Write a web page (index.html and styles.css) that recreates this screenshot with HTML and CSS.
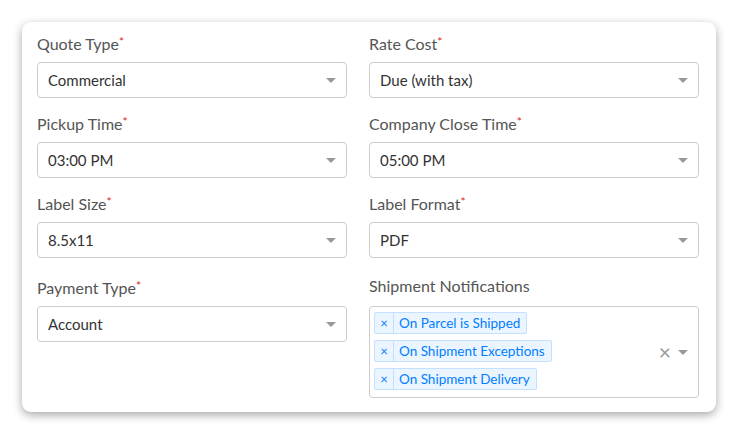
FILE: index.html
```html
<!DOCTYPE html>
<html lang="en">
<head>
    <meta charset="UTF-8">
    <title>Shipment Settings</title>
    <link rel="stylesheet" href="styles.css">
</head>
<body>
    <div class="card">
        <div class="form-grid">
            <div class="field">
                <label class="label">Quote Type<span class="req">*</span></label>
                <div class="select"><span class="value">Commercial</span><span class="arrow"></span></div>
            </div>
            <div class="field">
                <label class="label">Rate Cost<span class="req">*</span></label>
                <div class="select"><span class="value">Due (with tax)</span><span class="arrow"></span></div>
            </div>

            <div class="field">
                <label class="label">Pickup Time<span class="req">*</span></label>
                <div class="select"><span class="value">03:00 PM</span><span class="arrow"></span></div>
            </div>
            <div class="field">
                <label class="label">Company Close Time<span class="req">*</span></label>
                <div class="select"><span class="value">05:00 PM</span><span class="arrow"></span></div>
            </div>

            <div class="field">
                <label class="label">Label Size<span class="req">*</span></label>
                <div class="select"><span class="value">8.5x11</span><span class="arrow"></span></div>
            </div>
            <div class="field">
                <label class="label">Label Format<span class="req">*</span></label>
                <div class="select"><span class="value">PDF</span><span class="arrow"></span></div>
            </div>

            <div class="field last">
                <label class="label">Payment Type<span class="req">*</span></label>
                <div class="select"><span class="value">Account</span><span class="arrow"></span></div>
            </div>
            <div class="field last">
                <label class="label">Shipment Notifications</label>
                <div class="select multi">
                    <div class="tags">
                        <span class="tag"><span class="tag-x">×</span><span class="tag-text">On Parcel is Shipped</span></span>
                        <span class="tag"><span class="tag-x">×</span><span class="tag-text">On Shipment Exceptions</span></span>
                        <span class="tag"><span class="tag-x">×</span><span class="tag-text">On Shipment Delivery</span></span>
                    </div>
                    <span class="clear">×</span>
                    <span class="arrow"></span>
                </div>
            </div>
        </div>
    </div>
</body>
</html>
```

FILE: styles.css
```css
/* General */
body {
    margin: 0;
    padding: 22px;
    background-color: #fff;
    font-family: Lato, "Liberation Sans", sans-serif;
    color: #333;
}

.card {
    width: 694px;
    height: 390px;
    box-sizing: border-box;
    padding: 12px 0 0 15px;
    background-color: #fff;
    border-radius: 9px;
    box-shadow: 0 3px 10px rgba(0, 0, 0, 0.35);
}

.form-grid {
    display: grid;
    grid-template-columns: 310px 330px;
    column-gap: 22px;
}

.field {
    margin-bottom: 16px;
}

.field.last {
    margin-top: 4px;
}

.label {
    display: block;
    height: 18px;
    line-height: 16px;
    margin-bottom: 10px;
    font-size: 16px;
    color: #555;
}

.req {
    color: #e02424;
    font-size: 12px;
    vertical-align: 4px;
}

/* Select boxes */
.select {
    display: flex;
    align-items: center;
    height: 36px;
    box-sizing: border-box;
    padding: 0 10px;
    border: 1px solid #ccc;
    border-radius: 4px;
    font-size: 15px;
    color: #333;
}

.value {
    flex: 1;
}

.arrow {
    width: 0;
    height: 0;
    border-left: 5px solid transparent;
    border-right: 5px solid transparent;
    border-top: 5px solid #999;
}

.select.multi {
    height: 92px;
    padding: 0 10px 0 4px;
}

.tags {
    flex: 1;
    display: flex;
    flex-direction: column;
    align-items: flex-start;
    gap: 6px;
    align-self: flex-start;
    margin-top: 5px;
}

.tag {
    display: flex;
    height: 22px;
    box-sizing: border-box;
    border: 1px solid #c2e0ff;
    border-radius: 2px;
    background-color: #ebf5ff;
    color: #007eff;
    font-size: 13.5px;
    line-height: 20px;
}

.tag-x {
    width: 18px;
    text-align: center;
    border-right: 1px solid #c2e0ff;
    font-size: 13px;
}

.tag-text {
    padding: 0 6px 0 5px;
}

.clear {
    font-size: 21px;
    line-height: 20px;
    color: #999;
    margin-right: 7px;
}
```
